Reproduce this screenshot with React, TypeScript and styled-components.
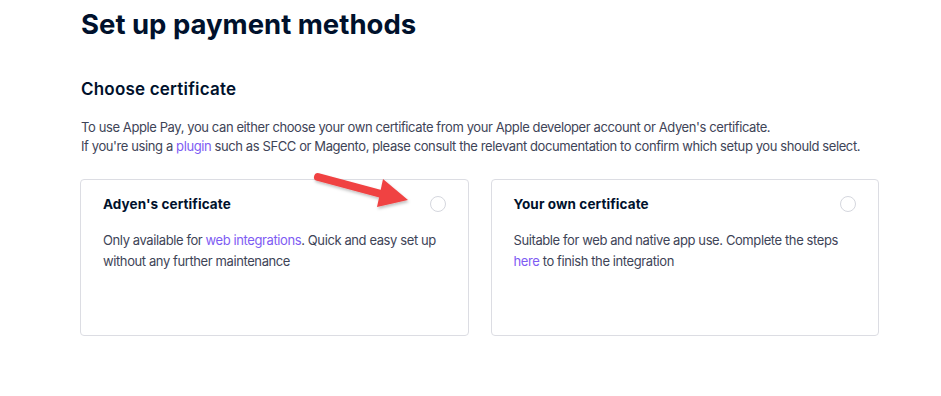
import React from "react";
import styled, { createGlobalStyle } from "styled-components";

// -------------------- Global --------------------
const GlobalStyle = createGlobalStyle`
  body {
    margin: 0;
    background: #ffffff;
    font-family: Inter, "Noto Sans", sans-serif;
    color: #00112c;
  }
`;

// -------------------- Layout --------------------
const Page = styled.main`
  position: relative;
  width: 800px;
  padding: 6px 0 0 81px;
`;

const Title = styled.h1`
  margin: 0;
  font-size: 27.5px;
  line-height: 36px;
  font-weight: 700;
`;

const SectionTitle = styled.h2`
  margin: 35px 0 0;
  font-size: 17px;
  line-height: 24px;
  font-weight: 600;
  letter-spacing: 0.2px;
`;

const Intro = styled.p`
  margin: 17px 0 0;
  font-size: 13px;
  line-height: 19px;
  letter-spacing: -0.4px;
  color: #3e4457;
`;

const Link = styled.a`
  color: #7e5cf3;
  text-decoration: none;
`;

const Cards = styled.div`
  display: grid;
  grid-template-columns: 1fr 1fr;
  gap: 22px;
  width: 799px;
  margin: 23px 0 0 -1px;
`;

const Card = styled.label`
  display: flex;
  flex-direction: column;
  height: 157px;
  box-sizing: border-box;
  padding: 15px 22px 0 22px;
  border: 1px solid #dcdde3;
  border-radius: 4px;
`;

const CardHead = styled.div`
  display: flex;
  justify-content: space-between;
  align-items: center;
`;

const CardTitle = styled.span`
  font-size: 13.5px;
  font-weight: 700;
  line-height: 18px;
  letter-spacing: 0.1px;
  color: #00112c;
`;

const Radio = styled.span`
  width: 14px;
  height: 14px;
  border: 1px solid #d5d7de;
  border-radius: 50%;
  background: #ffffff;
`;

const CardText = styled.p`
  margin: 17px 0 0;
  font-size: 13px;
  line-height: 21px;
  letter-spacing: -0.4px;
  color: #3e4457;
`;

const Arrow = styled.svg`
  position: absolute;
  left: 312px;
  top: 168px;
  overflow: visible;
`;

// -------------------- Component --------------------
const App = (): JSX.Element => {
  return (
    <>
      <GlobalStyle />
      <Page>
        <Title>Set up payment methods</Title>
        <SectionTitle>Choose certificate</SectionTitle>
        <Intro>
          To use Apple Pay, you can either choose your own certificate from your Apple developer account or Adyen's certificate.
          <br />
          If you're using a <Link href="#">plugin</Link> such as SFCC or Magento, please consult the relevant documentation to confirm which setup you should select.
        </Intro>
        <Cards>
          <Card>
            <CardHead>
              <CardTitle>Adyen's certificate</CardTitle>
              <Radio />
            </CardHead>
            <CardText>
              Only available for <Link href="#">web integrations</Link>. Quick and easy set up without any further maintenance
            </CardText>
          </Card>
          <Card>
            <CardHead>
              <CardTitle>Your own certificate</CardTitle>
              <Radio />
            </CardHead>
            <CardText>
              Suitable for web and native app use. Complete the steps <Link href="#">here</Link> to finish the integration
            </CardText>
          </Card>
        </Cards>
        <Arrow width="100" height="50" viewBox="0 0 100 50">
          <defs>
            <filter id="shadow" x="-20%" y="-40%" width="140%" height="180%">
              <feDropShadow dx="1" dy="2" stdDeviation="1.5" floodColor="#000" floodOpacity="0.25" />
            </filter>
          </defs>
          <g filter="url(#shadow)">
            <line x1="6" y1="9" x2="73" y2="27" stroke="#f04343" strokeWidth="8" strokeLinecap="round" />
            <polygon points="71,11 96,32 65,39" fill="#f04343" />
          </g>
        </Arrow>
      </Page>
    </>
  );
};

export default App;
